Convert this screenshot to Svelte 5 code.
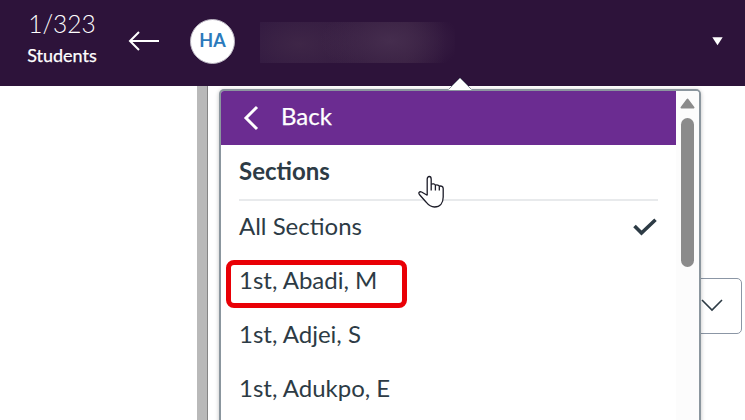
<script lang="ts">
  let current = 1;
  let total = 323;
  let selected = 'All Sections';

  const sections = [
    { name: 'All Sections' },
    { name: '1st, Abadi, M', marked: true },
    { name: '1st, Adjei, S' },
    { name: '1st, Adukpo, E' }
  ];
</script>

<div class="page">
  <header>
    <div class="count">
      <span class="number">{current}/{total}</span>
      <span class="label">Students</span>
    </div>
    <svg class="prev" width="32" height="20" viewBox="0 0 32 20" aria-label="Previous">
      <path d="M31 10H2M11 1L2 10L11 19" />
    </svg>
    <div class="avatar">HA</div>
    <div class="student"></div>
    <svg class="caret" width="11" height="9" viewBox="0 0 11 9">
      <path d="M0.3 0.2H10.7L5.5 8.3Z" />
    </svg>
  </header>

  <main>
    <div class="gutter"></div>
    <div class="select">
      <svg width="22" height="13" viewBox="0 0 22 13">
        <path d="M1 1L11 11L21 1" />
      </svg>
    </div>
  </main>

  <div class="popover">
    <svg class="arrow" width="24" height="13" viewBox="0 0 24 13">
      <path d="M0 13L12 1L24 13Z" fill="#fff" />
      <path d="M0.5 12.5L12 1L23.5 12.5" fill="none" stroke="#8b969e" />
    </svg>
    <div class="menu">
      <div class="list">
        <button class="back">
          <svg width="16" height="26" viewBox="0 0 16 26">
            <path d="M14 2L3 13L14 24" />
          </svg>
          <span>Back</span>
        </button>
        <h2>Sections</h2>
        <ul>
          {#each sections as section}
            <li class:marked={section.marked}>
              <span>{section.name}</span>
              {#if section.name === selected}
                <svg width="26" height="19" viewBox="0 0 26 19">
                  <path d="M2.5 8L9.5 15L23.5 1.8" />
                </svg>
              {/if}
            </li>
          {/each}
        </ul>
      </div>
      <div class="scrollbar">
        <svg width="15" height="11" viewBox="0 0 15 11">
          <path d="M7.5 1.5L13.5 9.5H1.5Z" />
        </svg>
        <div class="thumb"></div>
      </div>
    </div>
  </div>

  <svg class="pointer" width="28" height="34" viewBox="0 0 28 34">
    <path
      d="M9.2 20.5V4.2C9.2 0.6 13.2 0.6 13.2 4.2V9.2C14.5 8.4 17 8.8 17.4 10.3C18.8 9.5 20.8 10 21.3 11.3C23.3 10.5 25.2 11.5 25.2 13.5V22C25.2 28 22 32 16.5 32C12 32 10.2 29.7 8 27L1.6 19.7C0 17.8 1.3 16.2 3.6 17L9.2 20.3M13.2 9V15.5M17.4 10V15.5M21.3 11V15.5"
    />
  </svg>
</div>

<style>
  :global(body) {
    margin: 0;
    overflow: hidden;
  }
  .page {
    position: relative;
    width: 745px;
    height: 420px;
    overflow: hidden;
    background: #fff;
    color: #2d3b45;
    font-family: Lato, 'Liberation Sans', sans-serif;
  }
  svg {
    display: block;
    flex: none;
  }
  header {
    display: flex;
    align-items: center;
    box-sizing: border-box;
    height: 86px;
    padding: 0 22px 4px 12px;
    background: #2d133a;
    color: #fff;
  }
  .count {
    display: flex;
    flex-direction: column;
    align-items: center;
    width: 100px;
    padding-bottom: 4px;
  }
  .number {
    font-size: 24.5px;
    font-weight: 300;
    line-height: 32px;
  }
  .label {
    font-size: 18px;
    line-height: 30px;
    -webkit-text-stroke: 0.25px #fff;
  }
  .prev {
    margin-left: 16px;
    fill: none;
    stroke: #fff;
    stroke-width: 2;
  }
  .avatar {
    box-sizing: border-box;
    width: 45px;
    height: 45px;
    margin-left: 30px;
    border: 1px solid #b9b4c0;
    border-radius: 50%;
    background: #fff;
    color: #2b7abc;
    font-size: 18px;
    font-weight: 700;
    line-height: 41px;
    text-align: center;
  }
  .student {
    width: 195px;
    height: 41px;
    margin: 3px 0 0 25px;
    background:
      radial-gradient(ellipse 70px 38px at 130px 19px, #452d4e, transparent),
      radial-gradient(ellipse 70px 38px at 40px 22px, #3e2647, transparent),
      linear-gradient(to right, #311840, #371e40 75%, #2d133a 95%);
  }
  .caret {
    margin-left: auto;
    fill: #fff;
  }
  main {
    display: flex;
    justify-content: space-between;
    height: 334px;
    padding: 0 3px 0 197px;
  }
  .gutter {
    width: 10px;
    border-right: 1px solid #858585;
    background: #b9b9b9;
  }
  .select {
    display: flex;
    align-items: center;
    justify-content: flex-end;
    box-sizing: border-box;
    width: 80px;
    height: 56px;
    margin-top: 192px;
    padding: 0 18px 2px 0;
    border: 1px solid #8b96a5;
    border-radius: 5px;
  }
  .select svg {
    fill: none;
    stroke: #2d3b45;
    stroke-width: 1.6;
  }
  .popover {
    position: absolute;
    top: 89px;
    left: 219px;
    width: 482px;
  }
  .arrow {
    position: absolute;
    top: -12px;
    left: 229px;
  }
  .menu {
    display: flex;
    box-sizing: border-box;
    height: 400px;
    overflow: hidden;
    border: 2px solid #8b969e;
    border-radius: 5px;
    background: #fff;
    box-shadow: 0 1px 4px rgba(0, 0, 0, 0.25);
  }
  .list {
    flex: 1;
  }
  .back {
    display: flex;
    align-items: center;
    gap: 22px;
    width: 100%;
    height: 54px;
    padding: 0 0 0 22px;
    border: 0;
    background: #6b2c91;
    color: #fff;
    font: inherit;
    font-size: 24px;
  }
  .back span {
    padding-bottom: 5px;
    -webkit-text-stroke: 0.25px #fff;
  }
  .back svg {
    fill: none;
    stroke: #fff;
    stroke-width: 3;
  }
  h2 {
    height: 54px;
    margin: 0 18px;
    border-bottom: 2px solid #e8eaec;
    font-size: 24px;
    font-weight: 700;
    line-height: 51px;
  }
  ul {
    margin: 0;
    padding: 0;
    list-style: none;
  }
  li {
    position: relative;
    display: flex;
    justify-content: space-between;
    align-items: flex-start;
    height: 54px;
    padding: 0 18px;
    font-size: 24px;
    line-height: 50px;
  }
  li svg {
    margin-top: 17px;
    fill: none;
    stroke: #2d3b45;
    stroke-width: 3.6;
  }
  .marked::after {
    content: '';
    position: absolute;
    top: 5px;
    left: 5px;
    box-sizing: border-box;
    width: 181px;
    height: 48px;
    border: 5px solid #e90006;
    border-radius: 8px;
  }
  .scrollbar {
    display: flex;
    flex-direction: column;
    align-items: center;
    gap: 9px;
    width: 23px;
    padding-top: 7px;
    background: #fcfcfc;
  }
  .scrollbar svg {
    fill: #8b8b8b;
    stroke: #8b8b8b;
    stroke-width: 2;
    stroke-linejoin: round;
  }
  .thumb {
    width: 13px;
    height: 149px;
    border-radius: 7px;
    background: #8b8b8b;
  }
  .pointer {
    position: absolute;
    top: 175px;
    left: 418px;
    fill: #fff;
    stroke: #1c1c28;
    stroke-width: 1.3;
    stroke-linejoin: round;
  }
</style>
